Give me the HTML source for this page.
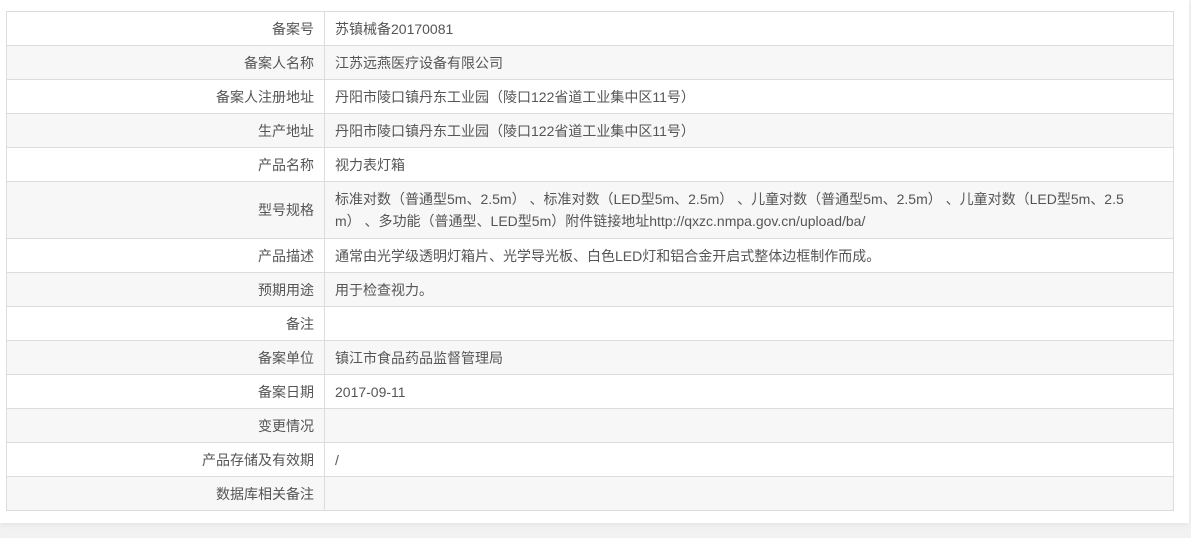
<!DOCTYPE html>
<html><head><meta charset="utf-8"><style>
html,body{margin:0;padding:0;background:#f2f2f2;width:1191px;height:538px;overflow:hidden}
.card{position:absolute;left:0;top:0;width:1189px;height:523px;background:#fff;box-shadow:0 2px 6px rgba(0,0,0,.06)}
table{position:absolute;left:6px;top:11px;width:1168px;border-collapse:collapse;font-family:"Liberation Sans","Noto Sans CJK SC",sans-serif;font-size:14px;color:#555;border:1px solid #d0d0d8}
td{border:1px solid #dcdcdc;height:34px;padding:0 10px;box-sizing:border-box;line-height:22px}
td.l{width:318px;text-align:right}
tr:nth-child(even) td{background:#f7f7f7}
tr.big td{height:57px}
</style></head><body><div class="card"></div>
<table>
<tr><td class="l">备案号</td><td>苏镇械备20170081</td></tr>
<tr><td class="l">备案人名称</td><td>江苏远燕医疗设备有限公司</td></tr>
<tr><td class="l">备案人注册地址</td><td>丹阳市陵口镇丹东工业园（陵口122省道工业集中区11号）</td></tr>
<tr><td class="l">生产地址</td><td>丹阳市陵口镇丹东工业园（陵口122省道工业集中区11号）</td></tr>
<tr><td class="l">产品名称</td><td>视力表灯箱</td></tr>
<tr class="big"><td class="l">型号规格</td><td style="white-space:nowrap">标准对数（普通型5m、2.5m）&nbsp;、标准对数（LED型5m、2.5m）&nbsp;、儿童对数（普通型5m、2.5m）&nbsp;、儿童对数（LED型5m、2.5<br>m）&nbsp;、多功能（普通型、LED型5m）附件链接地址http://qxzc.nmpa.gov.cn/upload/ba/</td></tr>
<tr><td class="l">产品描述</td><td>通常由光学级透明灯箱片、光学导光板、白色LED灯和铝合金开启式整体边框制作而成。</td></tr>
<tr><td class="l">预期用途</td><td>用于检查视力。</td></tr>
<tr><td class="l">备注</td><td></td></tr>
<tr><td class="l">备案单位</td><td>镇江市食品药品监督管理局</td></tr>
<tr><td class="l">备案日期</td><td>2017-09-11</td></tr>
<tr><td class="l">变更情况</td><td></td></tr>
<tr><td class="l">产品存储及有效期</td><td>/</td></tr>
<tr><td class="l">数据库相关备注</td><td></td></tr>
</table></body></html>
